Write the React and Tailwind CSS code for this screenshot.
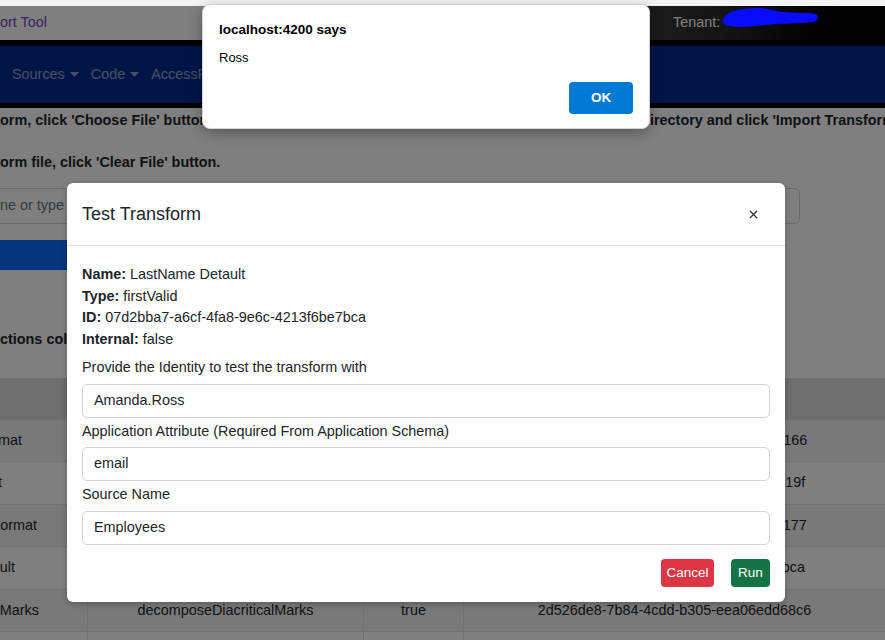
import React from 'react';

const rows = [
  { name: 'ISO Date Format', pr: 'pr-[65px]', type: 'dateFormat', internal: 'true', id: '1c6a7b0e-3f2d-4b8e-9a51-6f0d2e7c4166' },
  { name: 'Base Account', pr: 'pr-[85px]', type: 'static', internal: 'false', id: '5e0b9d4a-7c21-4f6e-8d3b-a2c19e5f819f' },
  { name: 'Phone Format', pr: 'pr-[50px]', type: 'e164phone', internal: 'true', id: '9b3f2c1d-6e4a-4d8b-b7f0-3a5c8e2d1177' },
  { name: 'LastName Detault', pr: 'pr-[72px]', type: 'firstValid', internal: 'false', id: '07d2bba7-a6cf-4fa8-9e6c-4213f6be7bca' },
  { name: 'Decompose Diacritical Marks', pr: 'pr-[48px]', type: 'decomposeDiacriticalMarks', internal: 'true', id: '2d526de8-7b84-4cdd-b305-eea06edd68c6' },
  { name: 'Username Lookup', pr: 'pr-[60px]', type: 'lookup', internal: 'false', id: '4f7a1e2b-8c3d-4a9e-b6f1-0d2c5e8a7b31' },
];

const Field = ({ value }) => (
  <div className="h-[34px] w-full rounded-[5px] border border-[#ced4da] px-[11px] flex items-center text-[14.4px] text-[#212529]">
    {value}
  </div>
);

export default function App() {
  return (
    <div className="relative h-[640px] w-full overflow-hidden bg-white font-['Liberation_Sans',Arial,sans-serif] text-[14.4px] text-[#212529]">
      {/* browser strip */}
      <div className="h-[6px] bg-[#f3f3f3]" />

      {/* top header */}
      <div className="flex h-[34px]">
        <div className="flex-1 flex items-center bg-white text-[#7646c6]">ort Tool</div>
        <div className="w-[325px] flex items-center bg-gradient-to-r from-[#444444] via-[#2a2a2a] to-black pl-[113px] text-white">
          Tenant:
        </div>
      </div>
      <div className="h-[6px] bg-black" />

      {/* nav */}
      <div className="flex h-[57px] items-center gap-[12px] bg-[#002a8c] pl-[12px] text-white/55">
        <span className="flex items-center gap-[5px]">Sources<Caret /></span>
        <span className="flex items-center gap-[5px]">Code<Caret /></span>
        <span>AccessProfiles</span>
      </div>
      <div className="h-[5px] bg-black" />

      {/* page content */}
      <div className="pt-[2px]">
        <div className="flex whitespace-nowrap font-bold leading-[21.6px]">
          <span className="w-[650px] shrink-0">orm, click 'Choose File' button and select the transform file from your local d</span>
          <span>irectory and click 'Import Transform' button.</span>
        </div>
        <p className="mt-[20px] font-bold leading-[21.6px] whitespace-nowrap">orm file, click 'Clear File' button.</p>
        <div className="mt-[15px] flex h-[36px] w-[800px] items-center rounded-r-[6px] border border-l-0 border-[#ced4da] text-[#6c757d]">
          ne or type a transform name to search
        </div>
        <div className="mt-[16px] h-[30px] w-[220px] rounded-r-[5px] bg-[#0d6efd]" />
        <p className="mt-[59px] font-bold leading-[21.6px] whitespace-nowrap">ctions column to edit or delete a transform.</p>

        <div className="mt-[27px] w-[885px]">
          <div className="grid h-[42px] grid-cols-[88px_276px_100px_421px] border-b border-[#dee2e6] bg-[#dcdcdc] font-bold">
            <div className="border-r border-[#dee2e6]" />
            <div className="flex items-center justify-center border-r border-[#dee2e6]">Type</div>
            <div className="flex items-center justify-center border-r border-[#dee2e6]">Internal</div>
            <div className="flex items-center justify-center">ID</div>
          </div>
          {rows.map((r, i) => (
            <div
              key={r.id}
              className={`grid h-[42.5px] grid-cols-[88px_276px_100px_421px] border-b border-[#dee2e6] ${i % 2 === 0 ? 'bg-[#f2f2f2]' : 'bg-white'}`}
            >
              <div className={`flex items-center justify-end overflow-hidden whitespace-nowrap border-r border-[#dee2e6] ${r.pr}`}>{r.name}</div>
              <div className="flex items-center justify-center border-r border-[#dee2e6]">{r.type}</div>
              <div className="flex items-center justify-center border-r border-[#dee2e6]">{r.internal}</div>
              <div className="flex items-center justify-center">{r.id}</div>
            </div>
          ))}
        </div>
      </div>

      {/* modal backdrop */}
      <div className="absolute inset-x-0 top-[6px] bottom-0 bg-black/50" />

      {/* redaction scribble */}
      <svg className="absolute left-[720px] top-[4px]" width="100" height="26" viewBox="0 0 100 26">
        <path d="M4 14 C8 6 20 5 34 4 C44 3 52 6 62 8 C74 9 88 8 96 10 C99 12 98 17 94 18 C80 20 60 19 44 21 C30 23 14 24 6 21 C2 19 2 16 4 14 Z" fill="#0a0aff" />
      </svg>

      {/* Test Transform modal */}
      <div className="absolute left-[67px] top-[183px] w-[718px] rounded-[6px] bg-white shadow-[0_2px_6px_rgba(0,0,0,0.25)]">
        <div className="flex h-[63px] items-center justify-between border-b border-[#dee2e6] pl-[15px] pr-[27px]">
          <h5 className="text-[18px] text-[#212529]">Test Transform</h5>
          <svg width="9" height="9" viewBox="0 0 9 9" className="text-[#333]">
            <path d="M1 1 L8 8 M8 1 L1 8" stroke="currentColor" strokeWidth="1.3" />
          </svg>
        </div>
        <div className="px-[15px] pt-[18px] pb-[15px]">
          <div className="leading-[21.6px]">
            <div><b>Name:</b> LastName Detault</div>
            <div><b>Type:</b> firstValid</div>
            <div><b>ID:</b> 07d2bba7-a6cf-4fa8-9e6c-4213f6be7bca</div>
            <div><b>Internal:</b> false</div>
          </div>
          <div className="mt-[7px] leading-[21.6px]">Provide the Identity to test the transform with</div>
          <div className="mt-[5px]"><Field value="Amanda.Ross" /></div>
          <div className="mt-[3px] leading-[21.6px]">Application Attribute (Required From Application Schema)</div>
          <div className="mt-[4px]"><Field value="email" /></div>
          <div className="mt-[3px] leading-[21.6px]">Source Name</div>
          <div className="mt-[6px]"><Field value="Employees" /></div>
          <div className="mt-[14px] flex justify-end gap-[17px]">
            <button className="flex h-[28px] w-[53px] items-center justify-center rounded-[4px] bg-[#dc3545] text-[13.5px] text-white">Cancel</button>
            <button className="flex h-[28px] w-[39px] items-center justify-center rounded-[4px] bg-[#157347] text-[13.5px] text-white">Run</button>
          </div>
        </div>
      </div>

      {/* browser alert */}
      <div className="absolute left-[202px] top-[4px] flex h-[125px] w-[448px] flex-col rounded-[8px] border border-[#d4d4d4] bg-white px-[16px] pt-[16px] shadow-[0_4px_14px_rgba(0,0,0,0.3)]">
        <div className="text-[13.5px] font-bold leading-[18px] text-black">localhost:4200 says</div>
        <div className="mt-[10px] text-[13px] leading-[18px] text-black">Ross</div>
        <div className="mt-[15px] flex justify-end">
          <button className="flex h-[32px] w-[64px] items-center justify-center rounded-[4px] bg-[#0078d4] text-[13.5px] font-bold text-white">OK</button>
        </div>
      </div>
    </div>
  );
}

function Caret() {
  return (
    <svg width="9" height="5" viewBox="0 0 9 5">
      <path d="M0 0 L9 0 L4.5 5 Z" fill="currentColor" />
    </svg>
  );
}
